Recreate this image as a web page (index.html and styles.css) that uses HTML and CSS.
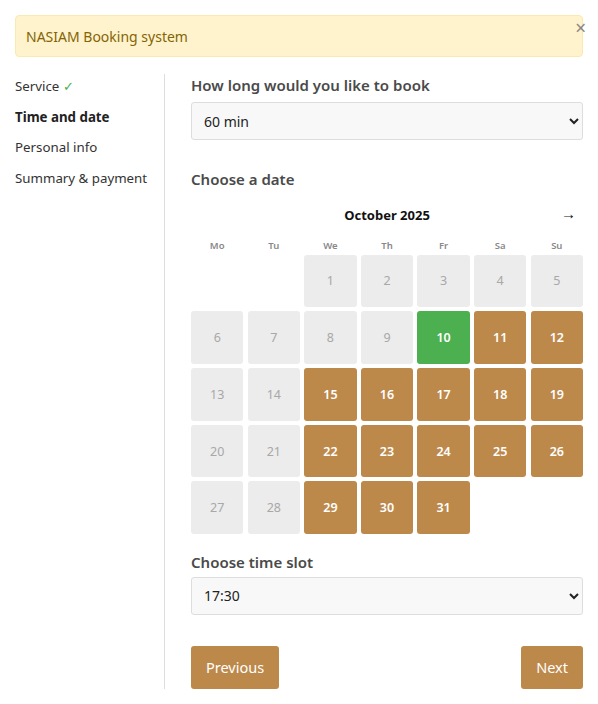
FILE: index.html
```html
<!DOCTYPE html>
<html lang="en">
<head>
<meta charset="utf-8">
<title>NASIAM Booking system</title>
<link rel="stylesheet" href="styles.css">
</head>
<body>
<div class="page">
  <div class="alert">
    <span class="alert-text">NASIAM Booking system</span>
    <span class="alert-close">×</span>
  </div>
  <div class="layout">
    <nav class="steps">
      <div class="step">Service <span class="check">✓</span></div>
      <div class="step active">Time and date</div>
      <div class="step">Personal info</div>
      <div class="step">Summary &amp; payment</div>
    </nav>
    <main class="main">
      <h3 class="label">How long would you like to book</h3>
      <select class="field">
        <option>60 min</option>
      </select>

      <h3 class="label date-label">Choose a date</h3>
      <div class="calendar">
        <div class="cal-head">
          <span class="cal-title">October 2025</span>
          <span class="cal-next">→</span>
        </div>
        <div class="cal-grid">
          <div class="wd">Mo</div><div class="wd">Tu</div><div class="wd">We</div><div class="wd">Th</div><div class="wd">Fr</div><div class="wd">Sa</div><div class="wd">Su</div>
          <div class="day empty"></div><div class="day empty"></div>
          <div class="day off">1</div><div class="day off">2</div><div class="day off">3</div><div class="day off">4</div><div class="day off">5</div>
          <div class="day off">6</div><div class="day off">7</div><div class="day off">8</div><div class="day off">9</div>
          <div class="day selected">10</div><div class="day free">11</div><div class="day free">12</div>
          <div class="day off">13</div><div class="day off">14</div>
          <div class="day free">15</div><div class="day free">16</div><div class="day free">17</div><div class="day free">18</div><div class="day free">19</div>
          <div class="day off">20</div><div class="day off">21</div>
          <div class="day free">22</div><div class="day free">23</div><div class="day free">24</div><div class="day free">25</div><div class="day free">26</div>
          <div class="day off">27</div><div class="day off">28</div>
          <div class="day free">29</div><div class="day free">30</div><div class="day free">31</div>
        </div>
      </div>

      <h3 class="label slot-label">Choose time slot</h3>
      <select class="field">
        <option>17:30</option>
      </select>

      <div class="actions">
        <button class="btn">Previous</button>
        <button class="btn">Next</button>
      </div>
    </main>
  </div>
</div>
</body>
</html>
```

FILE: styles.css
```css
* { box-sizing: border-box; }
html, body { margin: 0; padding: 0; background: #fff; }
body {
  font-family: "Noto Sans", "Open Sans", "Liberation Sans", sans-serif;
  color: #333;
  font-size: 14px;
}
.page { padding: 15px; }

.alert {
  position: relative;
  height: 42px;
  background: #fef3cd;
  border: 1px solid #fbe9b0;
  border-radius: 4px;
  color: #856404;
  font-size: 14px;
  display: flex;
  align-items: center;
  padding: 0 10px;
}
.alert-close {
  position: absolute;
  right: -4px;
  top: 2px;
  font-size: 19px;
  line-height: 20px;
  color: #888;
}

.layout {
  display: flex;
  margin-top: 17px;
}
.steps {
  width: 150px;
  flex: none;
  border-right: 1px solid #ddd;
  padding-top: 2px;
  display: flex;
  flex-direction: column;
  gap: 10.7px;
}
.step {
  line-height: 20px;
  font-size: 13.3px;
  color: #333;
}
.step.active { font-weight: 700; color: #222; }
.check { color: #4caf50; }

.main {
  flex: 1;
  padding-left: 26px;
  display: flex;
  flex-direction: column;
}
.label {
  margin: 0 0 6px;
  font-size: 15px;
  line-height: 22px;
  font-weight: 600;
  color: #4a4a4a;
}
.field {
  height: 38px;
  width: 100%;
  background: #f8f8f8;
  border: 1px solid #ddd;
  border-radius: 3px;
  padding: 0 8px;
  font-family: inherit;
  font-size: 14px;
  color: #222;
}
.date-label { margin-top: 28px; }

.calendar { margin-top: 7px; }
.cal-head {
  position: relative;
  height: 24px;
  display: flex;
  align-items: center;
  justify-content: center;
}
.cal-title {
  font-weight: 700;
  font-size: 13px;
  color: #111;
}
.cal-next {
  position: absolute;
  right: 7px;
  top: -1px;
  line-height: 22px;
  font-size: 15px;
  color: #111;
}
.cal-grid {
  margin-top: 12px;
  display: grid;
  grid-template-columns: repeat(7, 1fr);
  column-gap: 4.2px;
  row-gap: 4.2px;
}
.wd {
  height: 14px;
  line-height: 14px;
  margin-bottom: -2.5px;
  text-align: center;
  font-size: 9.5px;
  font-weight: 600;
  color: #888;
}
.day {
  height: 52.5px;
  border-radius: 3px;
  display: flex;
  align-items: center;
  justify-content: center;
  font-size: 12.5px;
}
.day.empty { background: transparent; }
.day.off { background: #ececec; color: #a8a8a8; }
.day.free { background: #bd894b; color: #fff; font-weight: 600; }
.day.selected { background: #4caf50; color: #fff; font-weight: 600; }

.slot-label { margin-top: 17px; margin-bottom: 4px; }

.actions {
  margin-top: 31px;
  display: flex;
  justify-content: space-between;
}
.btn {
  height: 43px;
  padding: 0 15px;
  background: #bd894b;
  color: #fff;
  border: none;
  border-radius: 3px;
  font-family: inherit;
  font-size: 14.5px;
}
```
